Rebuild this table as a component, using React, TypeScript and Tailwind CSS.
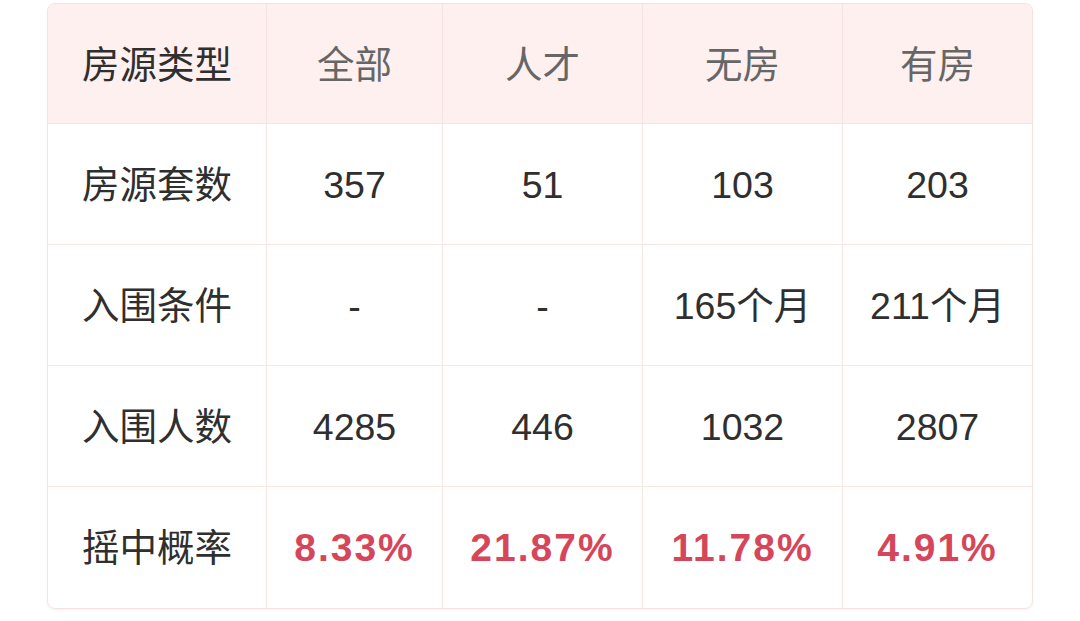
const header = ["房源类型", "全部", "人才", "无房", "有房"];

const rows: { label: string; values: string[]; hot?: boolean }[] = [
  { label: "房源套数", values: ["357", "51", "103", "203"] },
  { label: "入围条件", values: ["-", "-", "165个月", "211个月"] },
  { label: "入围人数", values: ["4285", "446", "1032", "2807"] },
  { label: "摇中概率", values: ["8.33%", "21.87%", "11.78%", "4.91%"], hot: true },
];

const font = { fontFamily: '"Liberation Sans", "Noto Sans CJK SC", sans-serif' };

export default function App() {
  return (
    <div className="h-[621px] w-[1080px] bg-white pl-[47px] pt-[3px]" style={font}>
      <div className="w-[986px] overflow-hidden rounded-[8px] border border-[#f4e3df] shadow-[0_1px_2px_rgba(200,160,150,0.15)]">
        <div className="grid grid-cols-[219px_176px_200px_200px_1fr]">
          {header.map((h, i) => (
            <div
              key={h}
              className={`flex h-[120px] items-center justify-center border-b border-[#f6e4e1] bg-[#fdf0ef] pt-[3px] text-[37.5px] ${
                i === 0 ? "text-[#2f2f2f]" : "text-[#666]"
              } ${i < 4 ? "border-r" : ""}`}
            >
              {h}
            </div>
          ))}
          {rows.map((r, ri) =>
            [r.label, ...r.values].map((v, i) => (
              <div
                key={`${ri}-${i}`}
                className={`flex h-[121px] items-center justify-center border-[#f6e7e4] pt-[2px] ${
                  ri < rows.length - 1 ? "border-b" : ""
                } ${i < 4 ? "border-r" : ""} ${
                  r.hot && i > 0
                    ? "text-[39px] font-bold tracking-[2px] text-[#d6465a]"
                    : "text-[37.5px] text-[#2f2f2f]"
                }`}
              >
                {v}
              </div>
            ))
          )}
        </div>
      </div>
    </div>
  );
}
